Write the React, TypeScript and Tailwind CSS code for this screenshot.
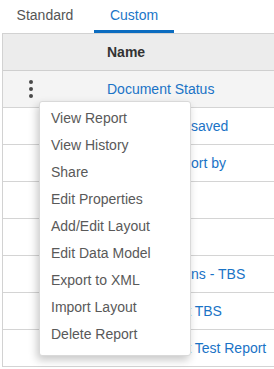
import React from 'react';

const rows = [
  'Document Status',
  'Estimate Not saved',
  'Expense Report by',
  'Invoices',
  'Budget',
  'Tax Exemptions - TBS',
  'Cash Receipt TBS',
  'Cash Receipt Test Report',
];

const menuItems = [
  'View Report',
  'View History',
  'Share',
  'Edit Properties',
  'Add/Edit Layout',
  'Edit Data Model',
  'Export to XML',
  'Import Layout',
  'Delete Report',
];

const Kebab: React.FC = () => (
  <div className="flex flex-col items-center gap-[3px]">
    <span className="w-[4px] h-[4px] rounded-full bg-[#4a4a4a]" />
    <span className="w-[4px] h-[4px] rounded-full bg-[#4a4a4a]" />
    <span className="w-[4px] h-[4px] rounded-full bg-[#4a4a4a]" />
  </div>
);

export default function App() {
  return (
    <div className="relative w-[274px] h-[369px] overflow-hidden bg-white font-['Liberation_Sans',Arial,sans-serif] text-[14px]">
      {/* tabs */}
      <div className="flex h-[33px] items-stretch">
        <div className="ml-[1px] w-[88px] flex items-center justify-center text-[#555555] pb-[3px]">
          Standard
        </div>
        <div className="ml-[5px] w-[80px] flex items-center justify-center text-[#1b76c8] border-b-[3px] border-[#0b6cc0]">
          Custom
        </div>
      </div>

      {/* table */}
      <div className="ml-[2px] w-[320px] border-l border-t border-[#d2d2d2]">
        <div className="flex h-[37px] bg-[#ececec] border-b border-[#cfcfcf]">
          <div className="w-[104px]" />
          <div className="flex items-center font-bold text-[#333333]">Name</div>
        </div>
        {rows.map((name, i) => (
          <div
            key={i}
            className={`flex h-[37px] border-b border-[#d4d4d4] ${i === 0 ? 'bg-[#f4f4f4]' : 'bg-white'}`}
          >
            <div className="w-[104px] flex items-center pl-[26px]">{i === 0 && <Kebab />}</div>
            <div className="flex items-center text-[#1a73c6] whitespace-nowrap">{name}</div>
          </div>
        ))}
      </div>

      {/* context menu */}
      <div className="absolute left-[39px] top-[101px] w-[152px] pt-[3px] pb-[7px] bg-white border border-[#d9d9d9] rounded-[3px] shadow-[-2px_4px_8px_rgba(0,0,0,0.22)]">
        {menuItems.map((item) => (
          <div key={item} className="h-[27px] flex items-center pl-[11px] text-[#595959] whitespace-nowrap">
            {item}
          </div>
        ))}
      </div>
    </div>
  );
}
